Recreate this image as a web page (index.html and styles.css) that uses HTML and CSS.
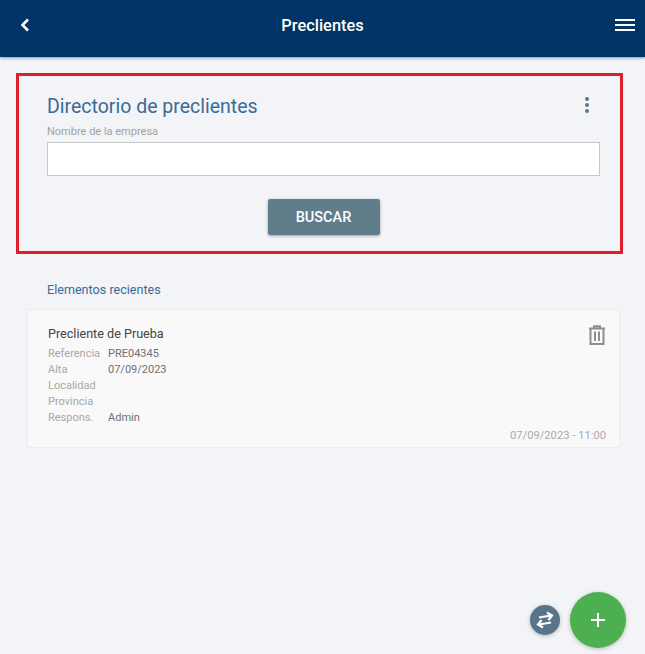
FILE: index.html
```html
<!DOCTYPE html>
<html lang="es">
<head>
  <meta charset="UTF-8" />
  <meta name="viewport" content="width=device-width, initial-scale=1" />
  <title>Preclientes</title>
  <link rel="stylesheet" href="styles.css">
</head>
<body>

  <header class="topbar">
    <svg class="icon-back" width="10" height="14" viewBox="0 0 10 14"><path d="M8 1.5 2.5 7 8 12.500" fill="none" stroke="#fff" stroke-width="2.600"/></svg>
    <h1 class="topbar-title">Preclientes</h1>
    <svg class="icon-menu" width="20" height="14" viewBox="0 0 20 14"><path d="M0 2h20M0 7h20M0 12h20" stroke="#fff" stroke-width="2"/></svg>
  </header>

  <section class="search-box">
    <div class="search-head">
      <h2 class="search-title">Directorio de preclientes</h2>
      <svg class="icon-dots" width="6" height="16" viewBox="0 0 6 16"><circle cx="3" cy="2" r="2"/><circle cx="3" cy="8" r="2"/><circle cx="3" cy="14" r="2"/></svg>
    </div>
    <label class="search-label" for="empresa">Nombre de la empresa</label>
    <input class="search-input" type="text" id="empresa" />
    <div class="search-actions">
      <button class="btn-buscar">BUSCAR</button>
    </div>
  </section>

  <h3 class="recent-title">Elementos recientes</h3>

  <article class="card">
    <svg class="icon-trash" width="18" height="20" viewBox="0 0 18 20"><path d="M1 3.500h16M6 3.500V1.200h6v2.300M2.500 3.500V19h13V3.500M7 6.500v9.500M11 6.500v9.500" fill="none" stroke="#8e8e8e" stroke-width="2"/></svg>
    <div class="card-name">Precliente de Prueba</div>
    <dl class="card-data">
      <dt>Referencia</dt><dd>PRE04345</dd>
      <dt>Alta</dt><dd>07/09/2023</dd>
      <dt>Localidad</dt><dd></dd>
      <dt>Provincia</dt><dd></dd>
      <dt>Respons.</dt><dd>Admin</dd>
    </dl>
    <div class="card-date">07/09/2023 - 11:00</div>
  </article>

  <button class="fab-swap">
    <svg width="22" height="18" viewBox="0 0 22 18"><path d="M5 6.500 17 4.500M13 1.500l5 3-3.500 4.500M17 11.500 5 13.500M9 16.500l-5-3 3.500-4.500" fill="none" stroke="#fff" stroke-width="2.200"/></svg>
  </button>
  <button class="fab-add">
    <svg width="16" height="16" viewBox="0 0 16 16"><path d="M8 1v14M1 8h14" stroke="#fff" stroke-width="2"/></svg>
  </button>

</body>
</html>
```

FILE: styles.css
```css
* {
  box-sizing: border-box;
}
html, body {
  height: 100%;
}
body {
  margin: 0;
  background-color: #f2f4f8;
  font-family: Roboto, sans-serif;
  overflow: hidden;
}
.topbar {
  height: 57px;
  padding: 0 10px 7px 20px;
  background-color: #003366;
  box-shadow: 0 1px 3px rgba(0, 30, 70, 0.45);
  display: flex;
  align-items: center;
  justify-content: space-between;
}
.topbar-title {
  margin: 0;
  font-size: 16.4px;
  font-weight: 500;
  color: #fff;
}
.search-box {
  width: 607px;
  height: 181px;
  margin: 16px 0 0 16px;
  padding: 19px 20px 0 28px;
  border: 3px solid #dc1f2e;
}
.search-head {
  display: flex;
  align-items: center;
  justify-content: space-between;
  padding-right: 10px;
}
.search-title {
  margin: 0;
  font-size: 19.5px;
  line-height: 24px;
  font-weight: 400;
  color: #3d6a94;
}
.icon-dots {
  fill: #5c7687;
  margin-top: -4px;
}
.search-label {
  display: block;
  margin-top: 6px;
  font-size: 11px;
  line-height: 13px;
  color: #a3a3a3;
}
.search-input {
  display: block;
  width: 100%;
  height: 34px;
  margin-top: 4px;
  border: 1px solid #c8c8c8;
  background-color: #fff;
}
.search-actions {
  display: flex;
  justify-content: center;
  margin-top: 23px;
}
.btn-buscar {
  width: 112px;
  height: 36px;
  border: none;
  border-radius: 2px;
  background-color: #607d8b;
  color: #fff;
  font-family: Roboto, sans-serif;
  font-size: 14.5px;
  font-weight: 500;
  box-shadow: 0 1px 3px rgba(0, 0, 0, 0.35);
}
.recent-title {
  margin: 28px 0 0 47px;
  font-size: 12.6px;
  line-height: 16px;
  font-weight: 400;
  color: #3d6a94;
}
.card {
  position: relative;
  width: 593px;
  height: 139px;
  margin: 11px 0 0 27px;
  padding: 16px 14px 0 20px;
  background-color: #f9f9f9;
  border: 1px solid #e9ebee;
  border-radius: 2px;
}
.card-name {
  font-size: 12.6px;
  line-height: 16px;
  color: #444;
}
.card-data {
  display: grid;
  grid-template-columns: 60px 1fr;
  grid-auto-rows: 16px;
  margin: 4px 0 0;
  font-size: 11px;
  line-height: 16px;
}
.card-data dt {
  color: #a8a8a8;
}
.card-data dd {
  margin: 0;
  color: #707070;
}
.card-date {
  position: absolute;
  right: 13px;
  bottom: 5px;
  font-size: 11.2px;
  color: #aaa;
}
.icon-trash {
  position: absolute;
  top: 15px;
  right: 13px;
}
.fab-swap, .fab-add {
  position: absolute;
  border: none;
  border-radius: 50%;
  padding: 0;
  display: flex;
  align-items: center;
  justify-content: center;
  box-shadow: 0 1px 4px rgba(0, 0, 0, 0.25);
}
.fab-swap {
  left: 530px;
  top: 605px;
  width: 30px;
  height: 30px;
  background-color: #56758c;
}
.fab-add {
  left: 570px;
  top: 592px;
  width: 56px;
  height: 56px;
  background-color: #4caf50;
}
```
